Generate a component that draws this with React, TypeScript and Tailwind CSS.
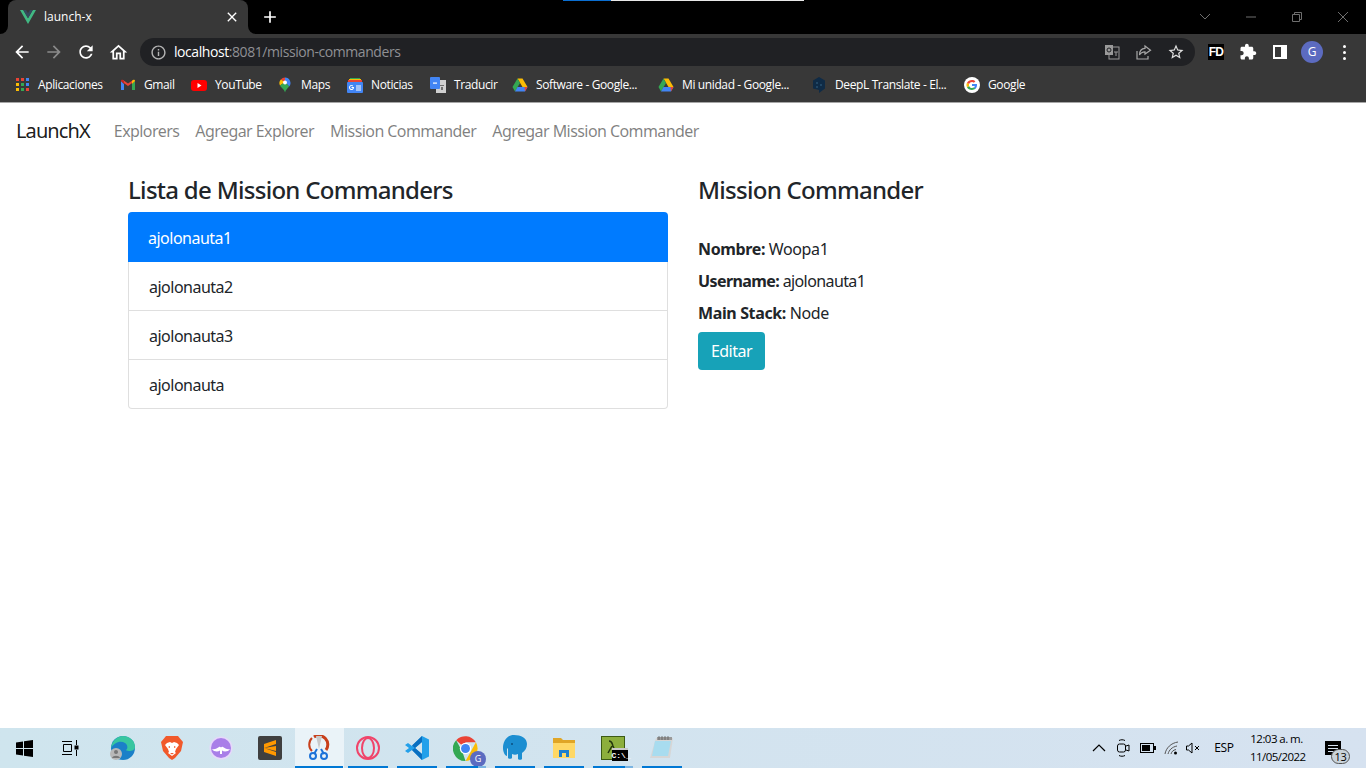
import React from "react";

const UI = "font-['Open_Sans','Noto_Sans',sans-serif]";

function M({ d, size = 20, className = "" }: { d: string; size?: number; className?: string }) {
  return (
    <svg width={size} height={size} viewBox="0 0 24 24" fill="currentColor" className={className}>
      <path d={d} />
    </svg>
  );
}

const bookmarks: { label: string; icon: React.ReactNode; cls: string }[] = [
  { label: "Aplicaciones", cls: "w-[106px]", icon: <AppsIcon /> },
  { label: "Gmail", cls: "w-[71px]", icon: <GmailIcon /> },
  { label: "YouTube", cls: "w-[86px]", icon: <YoutubeIcon /> },
  { label: "Maps", cls: "w-[70px]", icon: <MapsIcon /> },
  { label: "Noticias", cls: "w-[83px]", icon: <NewsIcon /> },
  { label: "Traducir", cls: "w-[82px]", icon: <TranslateIcon /> },
  { label: "Software - Google...", cls: "w-[146px]", icon: <DriveIcon /> },
  { label: "Mi unidad - Google...", cls: "w-[153px]", icon: <DriveIcon /> },
  { label: "DeepL Translate - El...", cls: "w-[153px]", icon: <DeepLIcon /> },
  { label: "Google", cls: "w-[70px]", icon: <GoogleIcon /> },
];

function AppsIcon() {
  const colors = ["#ea4335", "#ea4335", "#4285f4", "#fbbc05", "#34a853", "#4285f4", "#fbbc05", "#34a853", "#ea4335"];
  return (
    <div className="grid grid-cols-3 gap-[2px] w-[13px] h-[13px]">
      {colors.map((c, i) => (
        <span key={i} className="block w-[3px] h-[3px]" style={{ background: c }} />
      ))}
    </div>
  );
}

function GmailIcon() {
  return (
    <svg width="16" height="16" viewBox="0 0 16 16">
      <path d="M1 4v9h3V7z" fill="#4285f4" />
      <path d="M12 7v6h3V4z" fill="#34a853" />
      <path d="M1 4l7 5 7-5-2-1-5 3.500L3 3z" fill="#ea4335" />
      <path d="M1 4c0-1 1-1.600 2-1l1 1v3z" fill="#c5221f" />
      <path d="M15 4c0-1-1-1.600-2-1l-1 1v3z" fill="#fbbc05" />
    </svg>
  );
}

function YoutubeIcon() {
  return (
    <svg width="16" height="16" viewBox="0 0 16 16">
      <rect x="0" y="3" width="16" height="11" rx="3" fill="#ff0000" />
      <path d="M6.500 6l4 2.500-4 2.500z" fill="#fff" />
    </svg>
  );
}

function MapsIcon() {
  return (
    <svg width="16" height="16" viewBox="0 0 16 16">
      <path d="M8 0.500a5.500 5.500 0 0 1 4.200 9L8 5z" fill="#4285f4" />
      <path d="M8 .5A5.500 5.500 0 0 0 3.800 2.400L8 5z" fill="#ea4335" />
      <path d="M3.800 2.400A5.500 5.500 0 0 0 3 8.500L8 5z" fill="#fbbc05" />
      <path d="M3 8.500c1.500 2.500 4.200 3.500 5 7 .8-3 2.500-4 4.200-6L8 5z" fill="#34a853" />
      <circle cx="8" cy="5.500" r="2" fill="#fff" />
    </svg>
  );
}

function NewsIcon() {
  return (
    <svg width="16" height="16" viewBox="0 0 16 16">
      <path d="M3 1h10v5H3z" fill="#34a853" />
      <path d="M2 2h12v5H2z" fill="#fbbc05" />
      <path d="M1 3h14v5H1z" fill="#ea4335" />
      <rect x="0" y="5" width="16" height="11" rx="1" fill="#4285f4" />
      <path d="M7 10.500a2.500 2.500 0 1 1-.8-1.800l-.7.7a1.500 1.500 0 1 0 .4 1.600H4.500v-.9H7z" fill="#fff" />
      <path d="M9 8.500h5v1H9zm0 2h5v1H9zm0 2h5v1H9z" fill="#fff" />
    </svg>
  );
}

function TranslateIcon() {
  return (
    <svg width="16" height="16" viewBox="0 0 16 16">
      <rect x="6" y="3" width="10" height="13" fill="#d0d0d0" />
      <rect x="0" y="0" width="10" height="12" rx="1" fill="#4285f4" />
      <path d="M3 5.500h4v1.200H3z" fill="#fff" />
      <path d="M10 8h4v1h-4zm1 2h2v3h-2z" fill="#6f6f6f" />
    </svg>
  );
}

function DriveIcon() {
  return (
    <svg width="16" height="16" viewBox="0 0 16 16">
      <path d="M5.500 1.500h5l5 8.500h-5z" fill="#fbbc05" />
      <path d="M5.500 1.500L.5 10l2.500 4.500L8 6z" fill="#34a853" />
      <path d="M3 14.500h10l2.500-4.500H5.500z" fill="#4285f4" />
      <path d="M13 14.500l2.500-4.500h-3z" fill="#ea4335" />
    </svg>
  );
}

function DeepLIcon() {
  return (
    <svg width="16" height="16" viewBox="0 0 16 16">
      <path d="M8 0l6 3.500v8L8 16v-3l-6-1.500v-8z" fill="#0f2b46" />
      <circle cx="6" cy="6" r="1" fill="#28506f" />
      <circle cx="10" cy="8" r="1" fill="#28506f" />
      <circle cx="6" cy="10" r="1" fill="#28506f" />
    </svg>
  );
}

function GoogleIcon({ size = 16 }: { size?: number }) {
  return (
    <svg width={size} height={size} viewBox="0 0 16 16">
      <circle cx="8" cy="8" r="8" fill="#fff" />
      <path d="M13 8.100c0-.4 0-.7-.1-1H8v2h2.800c-.1.7-.5 1.200-1 1.600l1.600 1.200C12.400 11 13 9.700 13 8.100z" fill="#4285f4" />
      <path d="M8 13c1.400 0 2.500-.5 3.400-1.200l-1.600-1.200c-.5.300-1.100.5-1.800.5-1.300 0-2.500-.9-2.900-2.100L3 10.200C3.800 11.900 5.800 13 8 13z" fill="#34a853" />
      <path d="M5.100 9c-.2-.6-.2-1.400 0-2L3 5.800c-.7 1.400-.7 3 0 4.400z" fill="#fbbc05" />
      <path d="M8 5c.8 0 1.400.3 1.900.8l1.500-1.500C10.500 3.500 9.400 3 8 3 5.800 3 3.800 4.100 3 5.800L5.100 7C5.500 5.900 6.700 5 8 5z" fill="#ea4335" />
    </svg>
  );
}

function TabStrip() {
  return (
    <div className="relative flex h-[34px] bg-black pl-2 items-stretch">
      <div className="relative w-[240px] bg-[#383838] rounded-t-lg flex items-center pl-3 pr-2 text-white">
        {/* flared tab corners */}
        <span className="absolute -left-2 bottom-0 w-2 h-2 bg-[#383838]">
          <span className="block w-2 h-2 bg-black rounded-br-lg" />
        </span>
        <span className="absolute -right-2 bottom-0 w-2 h-2 bg-[#383838]">
          <span className="block w-2 h-2 bg-black rounded-bl-lg" />
        </span>
        <svg width="16" height="14" viewBox="0 0 16 14">
          <path d="M0 0h3.200L8 8.300 12.800 0H16L8 14z" fill="#41b883" />
          <path d="M3.200 0h2.900L8 3.300 9.900 0h2.900L8 8.300z" fill="#35495e" />
        </svg>
        <span className={`ml-2 text-[12px] flex-1 ${UI}`}>launch-x</span>
        <M size={16} d="M19 6.410 17.590 5 12 10.590 6.410 5 5 6.410 10.590 12 5 17.590 6.410 19 12 13.410 17.590 19 19 17.590 13.410 12z" />
      </div>
      <div className="ml-3 flex items-center text-white">
        <M size={20} d="M19 13h-6v6h-2v-6H5v-2h6V5h2v6h6v2z" />
      </div>
      <div className="flex-1" />
      <div className="flex items-center text-[#6e6e6e]">
        <div className="w-[46px] flex justify-center">
          <svg width="12" height="8" viewBox="0 0 12 8" fill="none" stroke="currentColor"><path d="M1 1l5 5 5-5" /></svg>
        </div>
        <div className="w-[46px] flex justify-center">
          <svg width="10" height="10" viewBox="0 0 10 10" fill="none" stroke="currentColor"><path d="M0 5h10" /></svg>
        </div>
        <div className="w-[46px] flex justify-center">
          <svg width="10" height="10" viewBox="0 0 10 10" fill="none" stroke="currentColor"><path d="M.5 2.500h7v7h-7zM2.500 2.500v-2h7v7h-2" /></svg>
        </div>
        <div className="w-[46px] flex justify-center">
          <svg width="10" height="10" viewBox="0 0 10 10" fill="none" stroke="currentColor"><path d="M0 0l10 10M10 0L0 10" /></svg>
        </div>
      </div>
      {/* loading strip at the very top of the screen */}
      <div className="absolute left-[563px] top-0 flex h-px">
        <div className="w-12 bg-[#0a6ed1]" />
        <div className="w-[193px] bg-[#e8e8e8]" />
      </div>
    </div>
  );
}

function Toolbar() {
  return (
    <div className="flex h-[36px] bg-[#383838] px-[6px] items-center text-white">
      <div className="w-8 flex justify-center"><M d="M20 11H7.830l5.590-5.590L12 4l-8 8 8 8 1.410-1.410L7.830 13H20v-2z" /></div>
      <div className="w-8 flex justify-center text-[#8a8a8a]"><M d="M4 11h12.170l-5.590-5.590L12 4l8 8-8 8-1.410-1.410L16.170 13H4v-2z" /></div>
      <div className="w-8 flex justify-center"><M d="M17.650 6.350C16.200 4.900 14.210 4 12 4c-4.420 0-7.990 3.580-7.990 8s3.570 8 7.990 8c3.730 0 6.840-2.550 7.730-6h-2.080c-.82 2.330-3.040 4-5.650 4-3.310 0-6-2.690-6-6s2.690-6 6-6c1.660 0 3.140.69 4.220 1.780L13 11h7V4l-2.350 2.350z" /></div>
      <div className="w-8 flex justify-center"><M size={21} d="M12 5.690l5 4.500V18h-2v-6H9v6H7v-7.810l5-4.500M12 3L2 12h3v8h6v-6h2v6h6v-8h3L12 3z" /></div>
      <div className="flex-1 ml-[6px] mr-[5px] h-7 rounded-full bg-[#202124] flex items-center pl-[10px] pr-[3px]">
        <M size={17} className="text-[#b5b5b5]" d="M11 7h2v2h-2zm0 4h2v6h-2zm1-9C6.480 2 2 6.480 2 12s4.480 10 10 10 10-4.480 10-10S17.520 2 12 2zm0 18c-4.410 0-8-3.590-8-8s3.590-8 8-8 8 3.590 8 8-3.590 8-8 8z" />
        <span className={`ml-[7px] flex-1 text-[14px] tracking-[-0.43px] text-[#8f9094] ${UI}`}>
          <span className="text-white">localhost</span>:8081/mission-commanders
        </span>
        <div className="w-8 flex justify-center">
          <svg width="16" height="16" viewBox="0 0 16 16">
            <rect x="5" y="3" width="10" height="12" fill="none" stroke="#9a9a9a" />
            <rect x="1" y="1" width="8" height="10" fill="#9a9a9a" />
            <circle cx="5" cy="6" r="2" fill="none" stroke="#202124" />
            <path d="M10 8h4M12 8v4" stroke="#9a9a9a" />
          </svg>
        </div>
        <div className="w-8 flex justify-center">
          <svg width="16" height="16" viewBox="0 0 16 16" fill="none" stroke="#a8a8a8" strokeWidth="1.200">
            <path d="M9 2l5.500 4.200L9 10V7.800C6 7.800 4.500 9 3.500 11 3.500 7 5.500 4.600 9 4.400z" />
            <path d="M1 7v8h11v-3" />
          </svg>
        </div>
        <div className="w-8 flex justify-center text-[#e0e0e0]">
          <M size={18} d="M22 9.240l-7.190-.62L12 2 9.190 8.630 2 9.240l5.460 4.730L5.820 21 12 17.270 18.180 21l-1.630-7.030L22 9.240zM12 15.400l-3.760 2.270 1-4.280-3.320-2.880 4.380-.38L12 6.100l1.710 4.040 4.380.38-3.320 2.880 1 4.280L12 15.400z" />
        </div>
      </div>
      <div className="w-8 flex justify-center">
        <span className="bg-black w-4 h-4 flex items-center justify-center text-[12px] tracking-[-0.8px] leading-none font-black font-['Liberation_Sans',sans-serif]">FD</span>
      </div>
      <div className="w-8 flex justify-center">
        <M size={18} d="M20.500 11H19V7c0-1.100-.9-2-2-2h-4V3.500C13 2.120 11.880 1 10.500 1S8 2.120 8 3.500V5H4c-1.100 0-1.990.9-1.990 2v3.800H3.500c1.490 0 2.700 1.210 2.700 2.700s-1.210 2.700-2.700 2.700H2V20c0 1.100.9 2 2 2h3.800v-1.500c0-1.490 1.210-2.700 2.700-2.700 1.490 0 2.700 1.210 2.700 2.700V22H17c1.100 0 2-.9 2-2v-4h1.500c1.380 0 2.500-1.120 2.500-2.500S21.880 11 20.500 11z" />
      </div>
      <div className="w-8 flex justify-center">
        <div className="w-[14px] h-[14px] border-2 border-r-[6px] border-white" />
      </div>
      <div className="w-8 flex justify-center">
        <div className={`w-[22px] h-[22px] rounded-full bg-[#5c6bc0] flex items-center justify-center text-[12px] ${UI}`}>G</div>
      </div>
      <div className="w-8 flex flex-col items-center gap-[3px]">
        <span className="w-[3px] h-[3px] rounded-full bg-white" />
        <span className="w-[3px] h-[3px] rounded-full bg-white" />
        <span className="w-[3px] h-[3px] rounded-full bg-white" />
      </div>
    </div>
  );
}

function BookmarksBar() {
  return (
    <div className="flex h-[33px] bg-[#383838] border-b border-[#a6a6a6] pl-[14px] pb-[3px] items-center text-white">
      {bookmarks.map((b) => (
        <div key={b.label} className={`flex items-center shrink-0 ${b.cls}`}>
          <div className="w-4 flex justify-center shrink-0">{b.icon}</div>
          <span className={`ml-2 text-[12px] tracking-[-0.38px] whitespace-nowrap ${UI}`}>{b.label}</span>
        </div>
      ))}
    </div>
  );
}

function NavBar() {
  const links = ["Explorers", "Agregar Explorer", "Mission Commander", "Agregar Mission Commander"];
  return (
    <nav className="flex items-center h-14 px-4">
      <span className="text-[20px] text-black/90 mr-4 tracking-[-0.9px]">LaunchX</span>
      <div className="flex">
        {links.map((l) => (
          <span key={l} className="px-2 text-black/50 tracking-[-0.57px]">{l}</span>
        ))}
      </div>
    </nav>
  );
}

function Content() {
  const items = ["ajolonauta1", "ajolonauta2", "ajolonauta3", "ajolonauta"];
  return (
    <div className="w-[1140px] mx-auto mt-4 grid grid-cols-2 text-[#212529]">
      <div className="px-[15px]">
        <h4 className="text-[24px] leading-[29px] font-medium mb-2 tracking-[-0.71px]">Lista de Mission Commanders</h4>
        <ul>
          <li className="bg-[#007bff] text-white px-5 pt-[14px] h-[50px] rounded-t tracking-[-0.5px]">{items[0]}</li>
          {items.slice(1).map((it, i) => (
            <li
              key={it}
              className={`px-5 pt-[13px] h-[49px] border-x border-b border-black/[.125] tracking-[-0.5px] ${i === 2 ? "rounded-b" : ""}`}
            >
              {it}
            </li>
          ))}
        </ul>
      </div>
      <div className="px-[15px]">
        <h4 className="text-[24px] leading-[29px] font-medium mb-[33px] tracking-[-0.72px]">Mission Commander</h4>
        <p className="mb-2 tracking-[-0.37px]"><strong className="font-bold">Nombre:</strong> Woopa1</p>
        <p className="mb-2 tracking-[-0.6px]"><strong className="font-bold">Username:</strong> ajolonauta1</p>
        <p className="mb-[7px] tracking-[-0.37px]"><strong className="font-bold">Main Stack:</strong> Node</p>
        <button className="bg-[#17a2b8] text-white rounded h-[38px] w-[67px] tracking-[-0.5px]">Editar</button>
      </div>
    </div>
  );
}

function TaskIcon({ children, state = "open" }: { children: React.ReactNode; state?: "none" | "open" | "stacked" | "active" }) {
  return (
    <div className={`relative w-[49px] h-full pr-[2px] flex items-center justify-center ${state === "active" ? "bg-[#eaf3f8]" : ""}`}>
      {children}
      {(state === "open" || state === "stacked") && <span className="absolute bottom-0 left-[4px] right-[5px] h-[2px] bg-[#0078d4]" />}
      {state === "stacked" && <span className="absolute bottom-0 left-[36px] right-[5px] h-[2px] bg-[#7ab4e2]" />}
      {state === "active" && <span className="absolute bottom-0 left-0 right-px h-[2px] bg-[#0078d4]" />}
    </div>
  );
}

function Taskbar() {
  return (
    <div className="flex h-10 bg-gradient-to-r from-[#cfe5ee] to-[#d6e2f0] items-center text-black">
      <div className="w-[49px] flex justify-center">
        <svg width="17" height="17" viewBox="0 0 17 17" fill="#000"><path d="M0 2.500l7-1v6.500H0zM8 1.300l9-1.300v8H8zM0 9h7v6.500l-7-1zM8 9h9v8l-9-1.300z" /></svg>
      </div>
      <div className="w-[50px] flex justify-center pr-[6px]">
        <svg width="18" height="16" viewBox="0 0 18 16" fill="none" stroke="#000"><path d="M0 1.500h10M0 14.500h10M1.500 4.500h8v7h-8zM14.500 0v5M14.500 10v6" /><rect x="13" y="6" width="3" height="3" fill="#000" /></svg>
      </div>
      <TaskIcon state="none">
        <svg width="26" height="26" viewBox="0 0 26 26">
          <circle cx="13" cy="13" r="12" fill="#1b80c8" />
          <path d="M1 13C2 5 8 1 13 1c6 0 12 4 12 11 0 3-3 4-6 4-2 0-3-1-3-1 2-1 2-5-1-7-5-3-11 0-14 5z" fill="#37c6a0" />
          <circle cx="6" cy="19" r="6" fill="#b8b8b8" />
          <circle cx="6" cy="17" r="2" fill="#777" />
          <path d="M2 23c1-3 7-3 8 0z" fill="#777" />
        </svg>
      </TaskIcon>
      <TaskIcon state="none">
        <svg width="22" height="24" viewBox="0 0 22 24">
          <path d="M5 0h12l2 2.500L22 6l-2 9-6 7-3 2-3-2-6-7-2-9 3-3.500z" fill="#f1592b" />
          <path d="M6 7l3-1 2 1 2-1 3 1 2 2-3 4-1 3 1 1-4 3-4-3 1-1-1-3-3-4z" fill="#fff" />
          <path d="M9 10l-2 1 2 1zM13 10l2 1-2 1zM9 17h4l-2 1.500z" fill="#f1592b" />
        </svg>
      </TaskIcon>
      <TaskIcon state="none">
        <svg width="24" height="24" viewBox="0 0 24 24">
          <circle cx="12" cy="12" r="11.500" fill="#e6d8fb" />
          <circle cx="12" cy="12" r="10" fill="#a97ee8" />
          <path d="M3 13c3 1 5-1 7-2 1-.5 1.500 0 2 .5.5-.5 1-1 2-.5 2 1 4 3 7 2-2 3-6 3-8 1.500V18h-2v-3.500C9 16 5 16 3 13z" fill="#fff" />
        </svg>
      </TaskIcon>
      <TaskIcon state="none">
        <svg width="24" height="24" viewBox="0 0 24 24">
          <rect width="24" height="24" rx="2" fill="#3f3f3f" />
          <path d="M18 4v4L6 12V8zM6 12l12 4v4L6 16zM6 12l12-2v5z" fill="#ff9800" />
        </svg>
      </TaskIcon>
      <TaskIcon state="active">
        <svg width="24" height="26" viewBox="0 0 24 26">
          <path d="M7 2A9 9 0 0 1 19 15" fill="none" stroke="#c8401c" strokeWidth="3" />
          <path d="M5 3a9 9 0 0 0 0 13" fill="none" stroke="#c8401c" strokeWidth="2" />
          <path d="M9 1l3 13 3-13-3 0z" fill="#c9c9c9" />
          <path d="M10 14l-3 5M14 14l3 5" stroke="#1d72d8" strokeWidth="2" />
          <circle cx="6" cy="21" r="3" fill="none" stroke="#1d72d8" strokeWidth="2" />
          <circle cx="17" cy="21" r="3" fill="none" stroke="#1d72d8" strokeWidth="2" />
        </svg>
      </TaskIcon>
      <TaskIcon>
        <svg width="26" height="26" viewBox="0 0 26 26" fill="none" stroke="#f0446a" strokeWidth="2">
          <circle cx="13" cy="13" r="11" />
          <ellipse cx="13" cy="13" rx="6" ry="10" />
        </svg>
      </TaskIcon>
      <TaskIcon>
        <svg width="24" height="24" viewBox="0 0 24 24">
          <path d="M17 0l7 3.500v17L17 24 7 14l-4 3-3-2 4-3-4-3 3-2 4 3z" fill="#23a0ea" />
          <path d="M17 6v12l-7-6z" fill="#d5e5ee" />
          <path d="M17 0v6l-7 6-3-2.500zM7 14l3-2 7 6v6z" fill="#0a6fc0" />
        </svg>
      </TaskIcon>
      <TaskIcon state="stacked">
        <div className="relative w-[25px] h-[25px]">
          <svg width="25" height="25" viewBox="0 0 24 24">
            <path d="M12 12L3 4a12 12 0 0 1 19 2H12z" fill="#ea4335" />
            <path d="M22 6a12 12 0 0 1-10 18l5-9z" fill="#fbbc05" />
            <path d="M12 24A12 12 0 0 1 3 4l6 11z" fill="#34a853" />
            <circle cx="12" cy="12" r="5.500" fill="#fff" />
            <circle cx="12" cy="12" r="4.300" fill="#4285f4" />
          </svg>
          <span className={`absolute -right-2 -bottom-[6px] w-4 h-4 rounded-full bg-[#5c6bc0] text-white text-[9px] flex items-center justify-center ${UI}`}>G</span>
        </div>
      </TaskIcon>
      <TaskIcon>
        <svg width="24" height="26" viewBox="0 0 24 26">
          <path d="M11 0C4 0 0 6 0 13c0 4 2 8 4 8V14c0-1 1-1 1 0v9c0 1 4 1 4 0v-4c2 1 4 1 6 0v5c0 1 4 1 4 0v-6c3-2 5-5 5-9C24 3 18 0 11 0z" fill="#1c8ed1" />
          <circle cx="9" cy="9" r="1" fill="#0a4f80" />
        </svg>
      </TaskIcon>
      <TaskIcon>
        <svg width="22" height="20" viewBox="0 0 22 20">
          <path d="M0 0h8l2 2h12v4H0z" fill="#e0a526" />
          <path d="M0 5h22v15H0z" fill="#ffd866" />
          <path d="M6 19V12h10v7h-3v-4H9v4z" fill="#1c7fd0" />
        </svg>
      </TaskIcon>
      <TaskIcon state="stacked">
        <div className="relative w-[24px] h-[24px]">
          <svg width="24" height="24" viewBox="0 0 24 24">
            <rect x=".5" y=".5" width="23" height="23" fill="#8cae3c" stroke="#3c5a14" />
            <path d="M8 5c3 0 3 2 4 5l3 7M11 10l-4 7" fill="none" stroke="#23350c" strokeWidth="1.500" />
          </svg>
          <span className="absolute -right-[3px] -bottom-[1px] w-[16px] h-[13px] bg-black border-t-2 border-[#c8c8c8] text-white text-[8px] leading-[11px] font-bold font-['Liberation_Mono',monospace]">C:\_</span>
        </div>
      </TaskIcon>
      <TaskIcon>
        <svg width="24" height="24" viewBox="0 0 24 24">
          <path d="M6 2l17 0-3 20-20 0z" fill="#d6d6d6" />
          <path d="M5 5l16 0-3 15H2z" fill="#a8dcef" />
          <path d="M7 1h15v3H7z" fill="#9a9a9a" />
          <path d="M9 0v4M12 0v4M15 0v4M18 0v4" stroke="#555" strokeWidth=".7" />
        </svg>
      </TaskIcon>
      <div className="flex-1" />
      <div className="flex items-center h-full">
        <div className="w-6 flex justify-center">
          <svg width="14" height="8" viewBox="0 0 14 8" fill="none" stroke="#000" strokeWidth="1.200"><path d="M1 7l6-6 6 6" /></svg>
        </div>
        <div className="w-6 flex justify-center">
          <svg width="14" height="18" viewBox="0 0 14 18" fill="none" stroke="#000"><path d="M3 1.500c2-1 4-1 6 0M3 16.500c2 1 4 1 6 0" /><rect x="1.500" y="5" width="8" height="8" rx="2" /><path d="M10 7l3-1v6l-3-1" /></svg>
        </div>
        <div className="w-[25px] flex justify-center">
          <svg width="16" height="10" viewBox="0 0 16 10"><rect x=".5" y=".5" width="13" height="9" fill="none" stroke="#000" /><rect x="2" y="2" width="8" height="6" /><rect x="14" y="3" width="2" height="4" /></svg>
        </div>
        <div className="w-6 flex justify-center">
          <svg width="16" height="14" viewBox="0 0 16 14" fill="none" stroke="#555"><path d="M1 13C2 7 7 2 14 1M4 13c1-4 4-7 9-8M7 13c.5-2 2-4 5-4.500" /><circle cx="11.500" cy="12" r="1.500" fill="#000" stroke="none" /></svg>
        </div>
        <div className="w-[19px] flex justify-center">
          <svg width="15" height="12" viewBox="0 0 15 12" fill="none" stroke="#000"><path d="M.5 4v4h2L6 11V1L2.500 4zM9 4l4 4M13 4L9 8" /></svg>
        </div>
        <div className={`w-[42px] mr-[5px] text-center text-[12px] tracking-[-0.3px] ${UI}`}>ESP</div>
        <div className={`w-[53px] text-center text-[11.500px] leading-[18px] tracking-[-0.55px] whitespace-nowrap ${UI}`}>
          <div>12:03 a. m.</div>
          <div>11/05/2022</div>
        </div>
        <div className="w-[16px]" />
        <div className="relative w-[16px] h-[14px] bg-black ml-[6px] mr-[25px] flex flex-col justify-center gap-[2px] px-[3px]">
          <span className="h-px bg-[#d6e2f0]" />
          <span className="h-px bg-[#d6e2f0]" />
          <span className="h-px bg-[#d6e2f0]" />
          <span className={`absolute left-[6px] top-[8px] w-[19px] h-[15px] rounded-full bg-[#c9d3da] border border-[#555] text-[11px] tracking-[-0.4px] flex items-center justify-center ${UI}`}>13</span>
        </div>
      </div>
    </div>
  );
}

export default function App() {
  return (
    <div className="h-screen w-full flex flex-col overflow-hidden bg-white font-['Noto_Sans',sans-serif] text-[16px] leading-6">
      <TabStrip />
      <Toolbar />
      <BookmarksBar />
      <div className="flex-1 min-h-0">
        <NavBar />
        <Content />
      </div>
      <Taskbar />
    </div>
  );
}
